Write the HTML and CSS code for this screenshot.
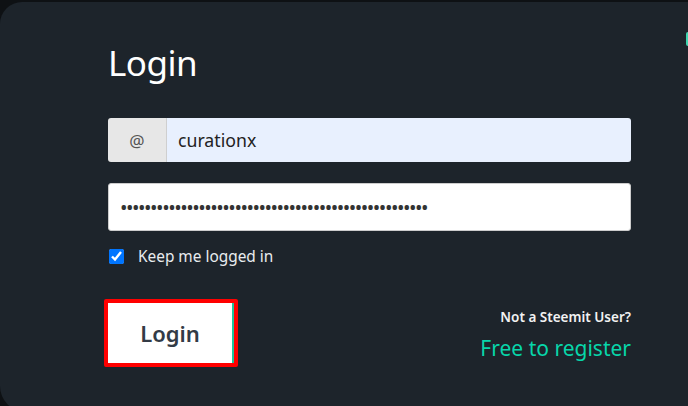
FILE: index.html
```html
<!DOCTYPE html>
<html lang="en">
<head>
    <meta charset="UTF-8">
    <meta name="viewport" content="width=device-width, initial-scale=1.0">
    <title>Login</title>
    <link rel="stylesheet" href="styles.css">
</head>
<body>
<div class="topbar"></div>
<div class="modal">
    <span class="close-edge"></span>
    <h1 class="title">Login</h1>
    <form class="login-form">
        <div class="input-group">
            <span class="addon">@</span>
            <input type="text" class="username" value="curationx">
        </div>
        <input type="password" class="password" value="passwordpasswordpasswordpasswordpasswordpassword123">
        <label class="keep">
            <input type="checkbox" checked>
            <span>Keep me logged in</span>
        </label>
        <div class="actions">
            <div class="highlight">
                <button type="button" class="btn-login">Login</button>
            </div>
            <div class="signup">
                <div class="signup-q">Not a Steemit User?</div>
                <a href="#" class="signup-link">Free to register</a>
            </div>
        </div>
    </form>
</div>
</body>
</html>
```

FILE: styles.css
```css
body {
    margin: 0;
    background-color: #0e1114;
    font-family: "Source Sans Pro", "Noto Sans", Arial, sans-serif;
    height: 406px;
    overflow: hidden;
}

.topbar {
    height: 2px;
}

.modal {
    position: relative;
    background-color: #1d242b;
    border-radius: 22px 0 0 26px;
    height: 410px;
    padding: 0 57px 0 108px;
    box-sizing: border-box;
}

.close-edge {
    position: absolute;
    right: 0;
    top: 30px;
    width: 2px;
    height: 14px;
    background-color: #3fd6b0;
    border-radius: 2px 0 0 2px;
}

.title {
    margin: 0;
    padding-top: 38px;
    font-size: 35px;
    font-weight: 400;
    line-height: 46px;
    color: #fff;
    letter-spacing: -0.5px;
}

.login-form {
    margin-top: 32px;
    display: flex;
    flex-direction: column;
}

.input-group {
    display: flex;
    height: 44px;
    border-radius: 3px;
    overflow: hidden;
}

.addon {
    width: 58px;
    background-color: #e7e7e7;
    border-right: 1px solid #cfcfcf;
    display: flex;
    justify-content: center;
    align-items: center;
    font-size: 17px;
    color: #555;
}

.username {
    flex: 1;
    border: none;
    background-color: #e8f0fe;
    padding: 0 11px;
    font-family: inherit;
    font-size: 17.7px;
    color: #222;
    outline: none;
}

.password {
    margin-top: 21px;
    height: 48px;
    border: 1px solid #ccc;
    border-radius: 3px;
    background-color: #fff;
    padding: 0 11px;
    font-family: inherit;
    font-size: 20px;
    letter-spacing: -1.5px;
    color: #333;
    outline: none;
    box-sizing: border-box;
}

.keep {
    margin-top: 15px;
    display: flex;
    align-items: center;
    gap: 14px;
    font-size: 15.4px;
    color: #e9ecef;
}

.keep input {
    margin: 0 0 0 1px;
    width: 15px;
    height: 15px;
}

.actions {
    margin-top: 32px;
    display: flex;
    justify-content: space-between;
    align-items: flex-start;
}

.highlight {
    margin-left: -4px;
    border: 4px solid #ff0000;
    border-radius: 2px;
    display: flex;
}

.btn-login {
    width: 126px;
    height: 60px;
    border: none;
    border-right: 2px solid #1fc59c;
    background-color: #fff;
    font-family: inherit;
    font-size: 22px;
    font-weight: 600;
    color: #333b46;
    cursor: pointer;
}

.signup {
    margin-top: 9px;
    text-align: right;
}

.signup-q {
    font-size: 13.5px;
    font-weight: 600;
    color: #f2f2f2;
}

.signup-link {
    display: block;
    margin-top: 8px;
    font-size: 21px;
    color: #07d6aa;
    text-decoration: none;
}
```
